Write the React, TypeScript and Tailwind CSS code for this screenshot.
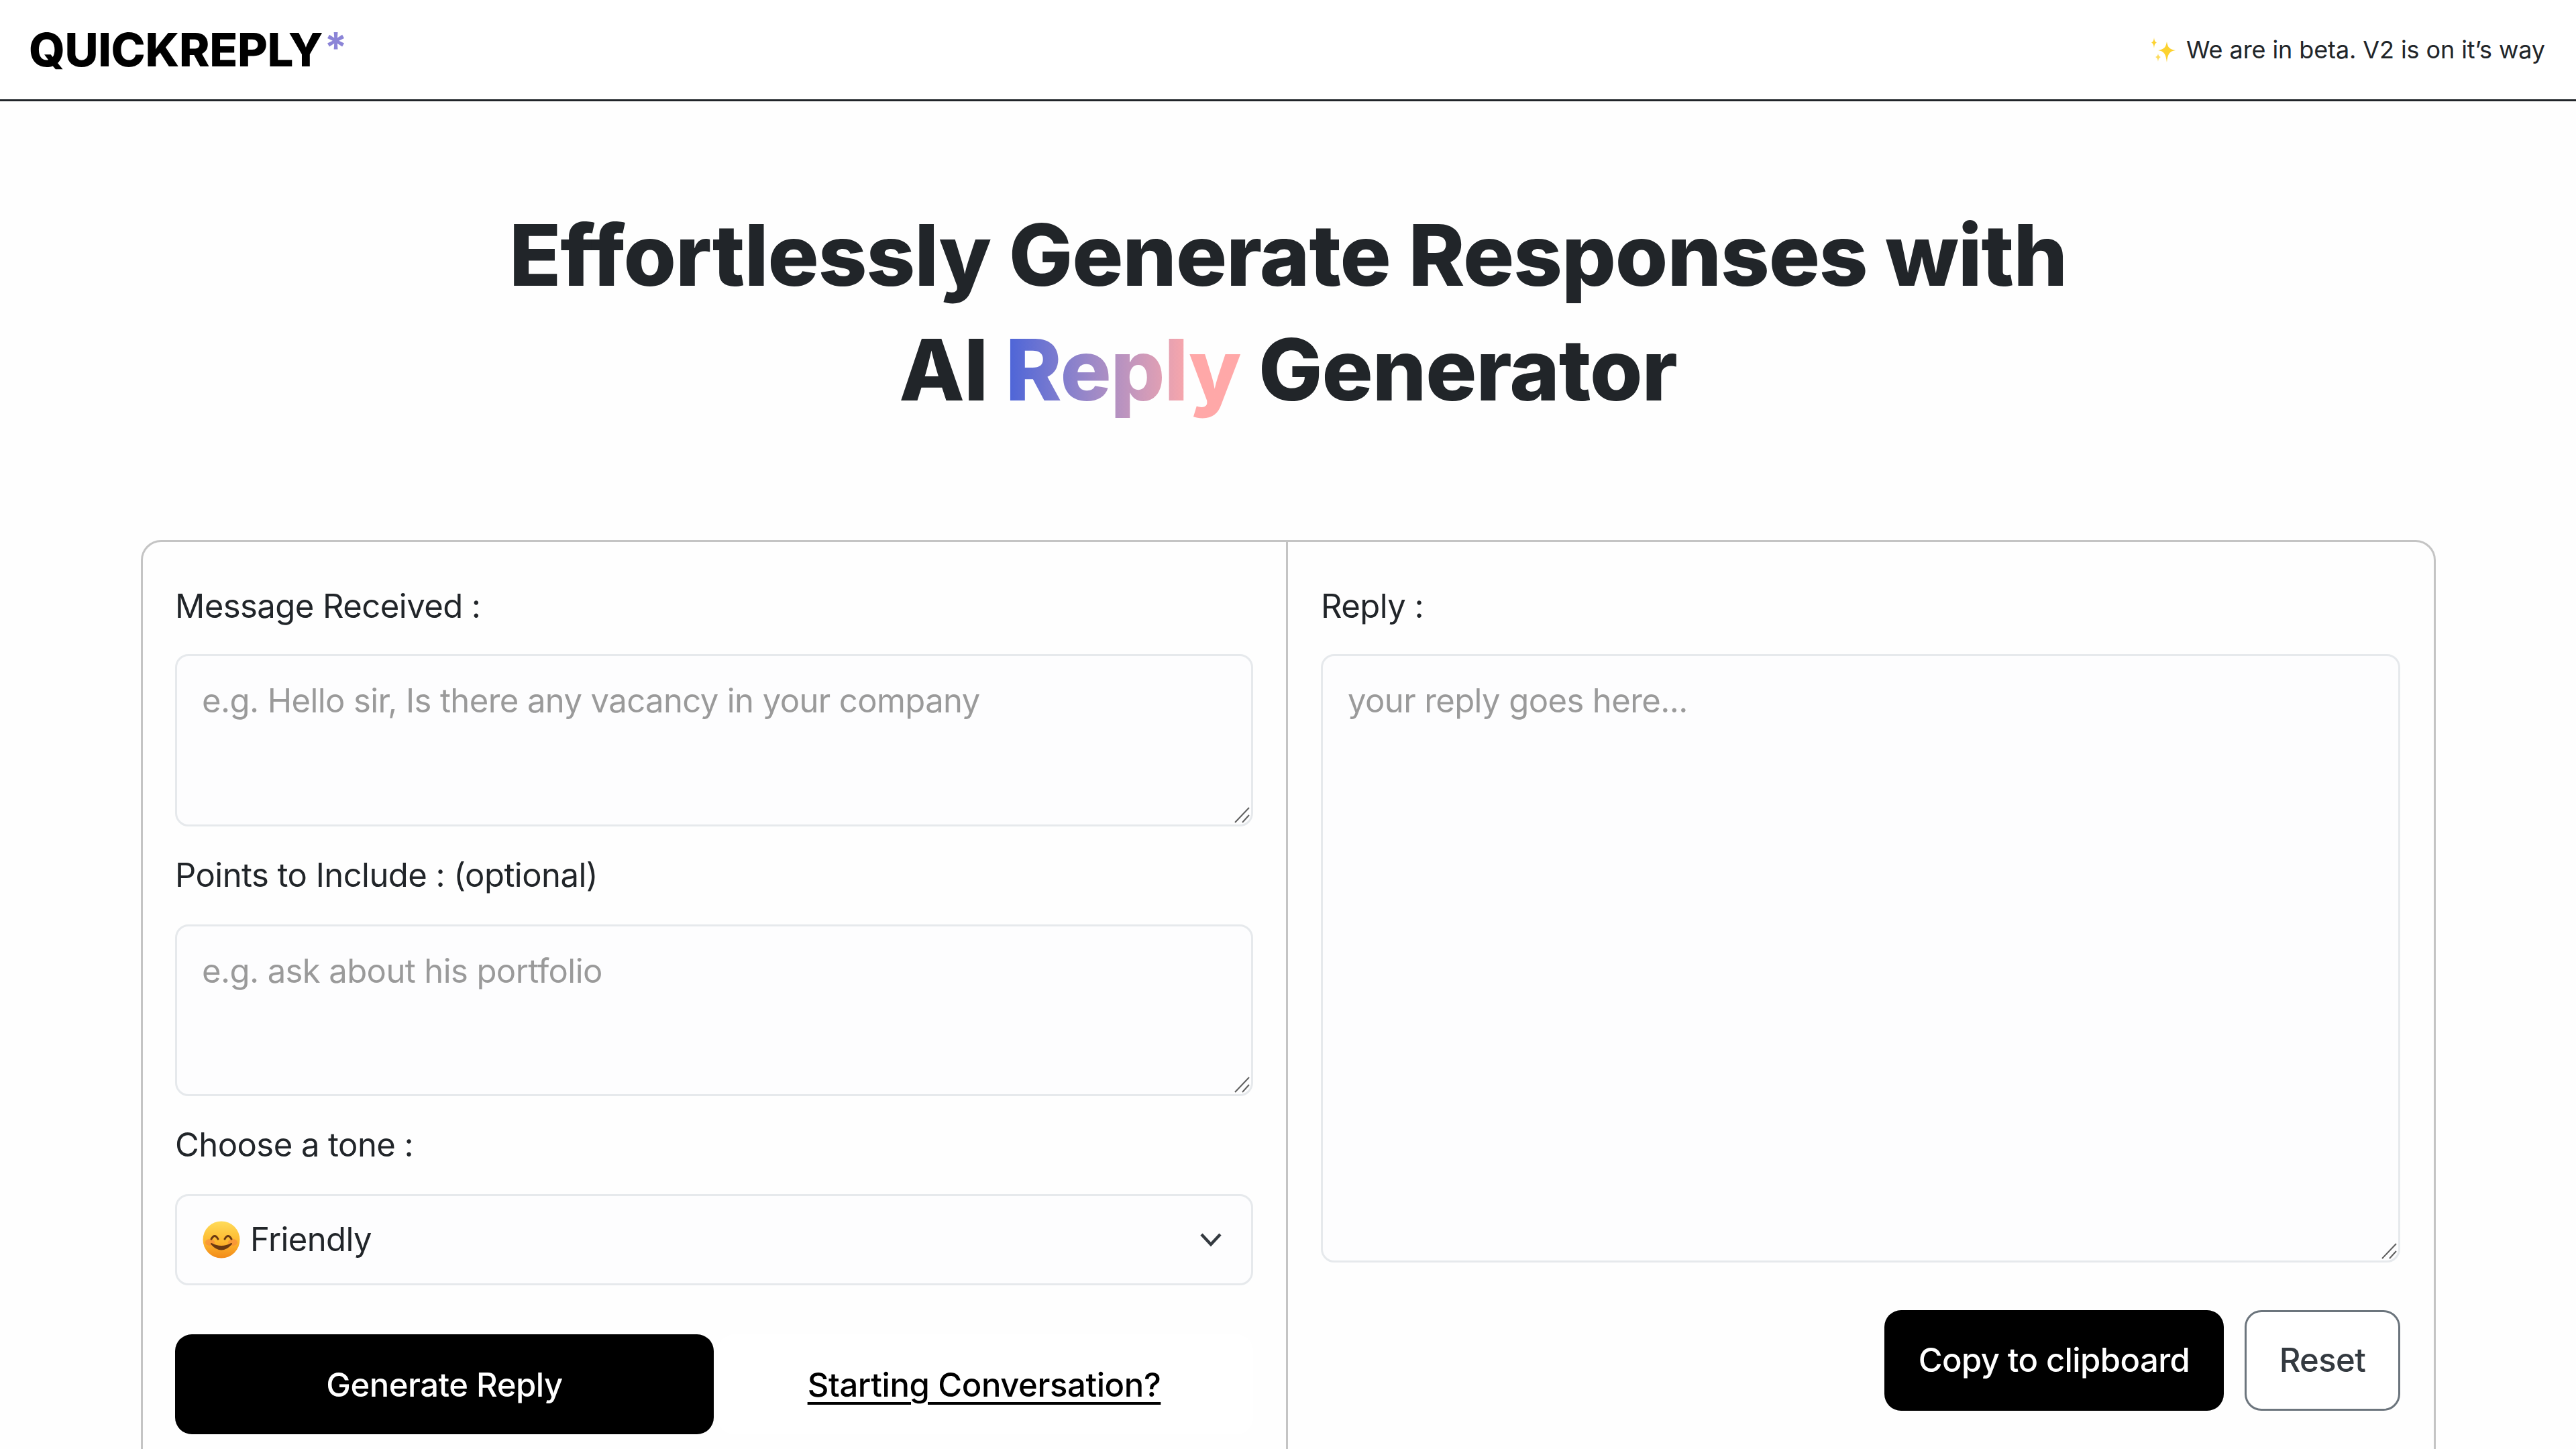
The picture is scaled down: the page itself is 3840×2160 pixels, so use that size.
function Sparkles() {
  return (
    <svg viewBox="0 0 37 37" className="h-[37px] w-[37px]">
      <path d="M23 6 C24.5 15 27 17.5 36 19 C27 20.5 24.5 24 23 37 C21.5 24 19 20.5 10 19 C19 17.5 21.5 15 23 6Z" fill="#fcd22f" />
      <path d="M4 0 C4.6 5 5.5 6.5 8 7.5 C5.5 8.5 4.6 10 4 16 C3.4 10 2.5 8.5 0 7.5 C2.5 6.5 3.4 5 4 0Z" fill="#fcd22f" />
      <path d="M10 24 C10.6 27 11.5 28 14 29 C11.5 30 10.6 31.5 10 36 C9.4 31.5 8.5 30 6 29 C8.5 28 9.4 27 10 24Z" fill="#fddc5c" />
    </svg>
  );
}

function SmileEmoji() {
  return (
    <svg viewBox="0 0 56 56" className="h-[56px] w-[56px] shrink-0">
      <defs>
        <linearGradient id="face" x1="0" y1="0" x2="0" y2="1">
          <stop offset="0%" stopColor="#ffdc5a" />
          <stop offset="55%" stopColor="#fdb82e" />
          <stop offset="100%" stopColor="#f28a1a" />
        </linearGradient>
      </defs>
      <circle cx="28" cy="28" r="27.5" fill="url(#face)" />
      <ellipse cx="11" cy="32" rx="7" ry="5" fill="#f5813f" opacity="0.55" />
      <ellipse cx="45" cy="32" rx="7" ry="5" fill="#f5813f" opacity="0.55" />
      <path d="M13 27 Q18 18 23 27" fill="none" stroke="#6b3a12" strokeWidth="3" strokeLinecap="round" />
      <path d="M33 27 Q38 18 43 27" fill="none" stroke="#6b3a12" strokeWidth="3" strokeLinecap="round" />
      <path d="M13 34 Q28 51 43 34 Q28 42 13 34Z" fill="#6b3a12" stroke="#6b3a12" strokeWidth="2" strokeLinejoin="round" />
    </svg>
  );
}

function Grip() {
  return (
    <svg viewBox="0 0 24 24" className="absolute right-[5px] bottom-[5px] h-[24px] w-[24px]">
      <path d="M2 23 L23 1 M13 23 L23 12" stroke="#5f5f5f" strokeWidth="2" fill="none" />
    </svg>
  );
}

function Field({ placeholder, height }: { placeholder: string; height: string }) {
  return (
    <div className={`relative ${height}`}>
      <textarea
        placeholder={placeholder}
        className="block h-full w-full resize-none rounded-[20px] border-[3px] border-[#e6e9ec] bg-[#fdfdfe] px-[37px] py-[30px] text-[49px] leading-[74px] tracking-[-0.6px] text-[#212529] outline-none placeholder:text-[#9a9a9a]"
      />
      <Grip />
    </div>
  );
}

function Label({ children, gap = "mb-[34px]" }: { children: React.ReactNode; gap?: string }) {
  return <div className={`${gap} text-[49px] leading-[74px] tracking-[-0.55px] text-[#212529]`}>{children}</div>;
}

export default function App() {
  return (
    <div className="h-screen overflow-hidden bg-[#fefefe] font-['Inter',sans-serif] text-[#212529]">
      <header className="flex h-[151px] items-center justify-between border-b-[3px] border-[#212529] bg-white pr-[46px] pl-[43px]">
        <div className="flex items-start text-[69px] leading-none font-extrabold tracking-[-0.4px] text-black">
          QUICKREPLY
          <span className="ml-[2px] text-[62px] leading-[62px] font-bold tracking-normal text-[#8b84d7]">*</span>
        </div>
        <div className="flex items-center gap-[15px] text-[36px] tracking-[-0.1px] text-[#212529]">
          <Sparkles />
          <span>We are in beta. V2 is on it’s way</span>
        </div>
      </header>

      <h1 className="pt-[144px] text-center text-[127px] leading-[171px] font-extrabold tracking-[-1.1px]">
        Effortlessly Generate Responses with
        <br />
        AI{" "}
        <span className="bg-gradient-to-r from-[#4a63d8] to-[#ffa8a8] to-80% bg-clip-text text-transparent">
          Reply
        </span>{" "}
        Generator
      </h1>

      <main className="mt-[168px] mr-[209px] ml-[210px] grid h-[1500px] grid-cols-[1707px_1fr] rounded-[30px] border-[3px] border-[#c4c4c4] bg-[#fefefe]">
        <section className="border-r-[3px] border-[#c4c4c4] pt-[59px] pr-[49px] pl-[48px]">
          <Label>Message Received :</Label>
          <Field placeholder="e.g. Hello sir, Is there any vacancy in your company" height="h-[257px]" />
          <div className="h-[36px]" />
          <Label gap="mb-[36px]">Points to Include : (optional)</Label>
          <Field placeholder="e.g. ask about his portfolio" height="h-[256px]" />
          <div className="h-[36px]" />
          <Label gap="mb-[36px]">Choose a tone :</Label>
          <div className="flex h-[136px] items-center justify-between rounded-[20px] border-[3px] border-[#e6e9ec] bg-[#fdfdfe] pr-[44px] pl-[38px]">
            <div className="flex items-center gap-[15px] text-[49px] tracking-[-0.6px]">
              <SmileEmoji />
              <span>Friendly</span>
            </div>
            <svg viewBox="0 0 32 20" className="h-[20px] w-[32px]">
              <path d="M2 2 L16 17 L30 2" fill="none" stroke="#343a40" strokeWidth="4.5" />
            </svg>
          </div>
          <div className="mt-[73px] flex h-[149px] gap-[6px]">
            <button className="w-[803px] rounded-[25px] bg-black pt-[3px] text-[49px] font-medium tracking-[-0.5px] text-white">Generate Reply</button>
            <div className="flex flex-1 items-center justify-center rounded-[25px] bg-white pt-[3px] pr-[4px] text-[49px] font-medium tracking-[-0.4px] text-black underline underline-offset-[8px]">
              Starting Conversation?
            </div>
          </div>
        </section>

        <section className="pt-[59px] pr-[50px] pl-[49px]">
          <Label>Reply :</Label>
          <Field placeholder="your reply goes here..." height="h-[907px]" />
          <div className="mt-[71px] flex justify-end gap-[31px]">
            <button className="h-[150px] w-[506px] rounded-[25px] bg-black text-[49px] font-medium tracking-[-0.6px] text-white">Copy to clipboard</button>
            <button className="h-[150px] w-[232px] rounded-[25px] border-[3px] border-[#6c757d] bg-white text-[49px] font-medium tracking-[-0.6px] text-[#343a40]">Reset</button>
          </div>
        </section>
      </main>
    </div>
  );
}
